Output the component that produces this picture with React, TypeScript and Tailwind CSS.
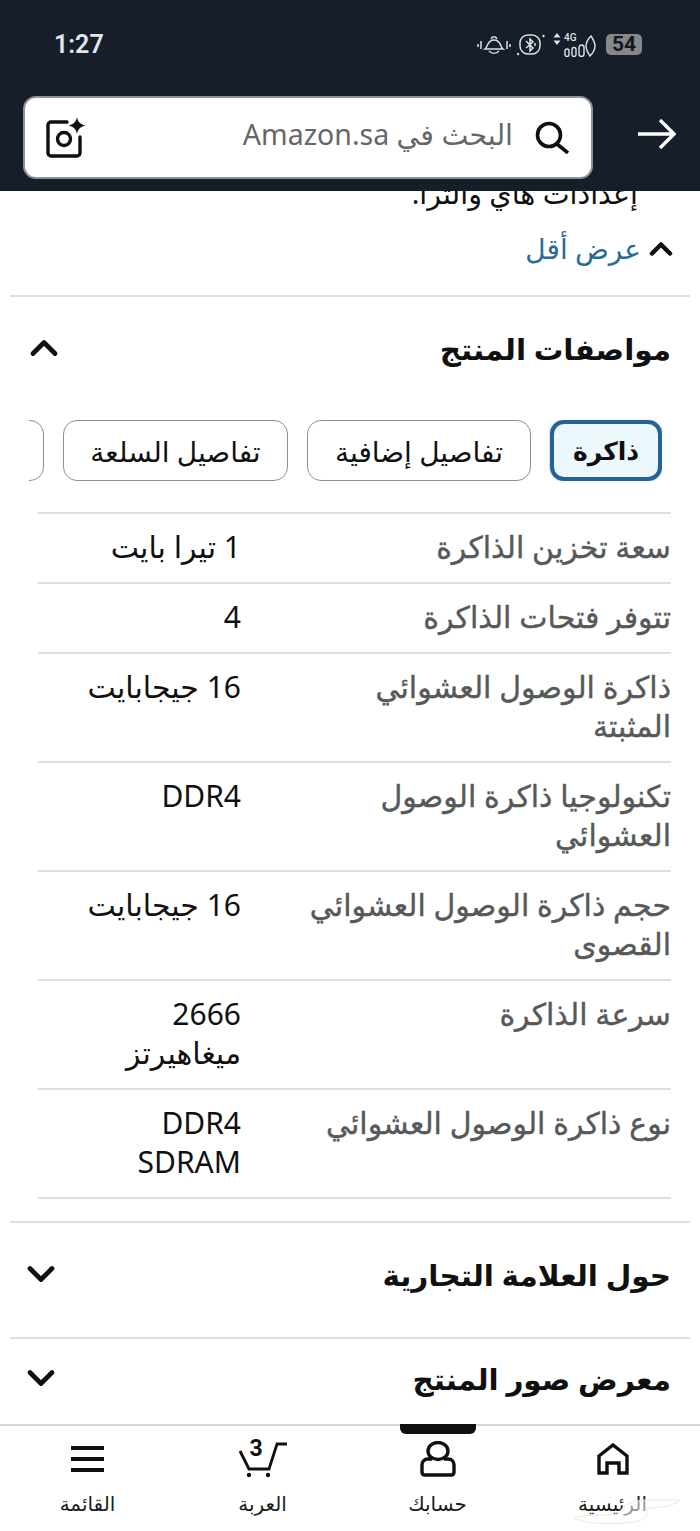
import React from 'react';
import clsx from 'clsx';
import { ChevronUp, ChevronDown } from 'lucide-react';

const specs = [
  { label: 'سعة تخزين الذاكرة', value: '1 تيرا بايت' },
  { label: 'تتوفر فتحات الذاكرة', value: '4' },
  { label: 'ذاكرة الوصول العشوائي المثبتة', value: '16 جيجابايت' },
  { label: 'تكنولوجيا ذاكرة الوصول العشوائي', value: 'DDR4' },
  { label: 'حجم ذاكرة الوصول العشوائي القصوى', value: '16 جيجابايت' },
  { label: 'سرعة الذاكرة', value: '2666 ميغاهيرتز' },
  { label: 'نوع ذاكرة الوصول العشوائي', value: 'DDR4 SDRAM' },
];

function StatusIcons() {
  return (
    <div dir="ltr" className="flex items-center">
      <svg width="34" height="22" viewBox="0 0 34 22" fill="none" stroke="#dfe2e6" strokeWidth="1.5">
        <path d="M1 10v3M4 7v8M30 7v8M33 10v3" />
        <path d="M8 15c3-2 2-9 9-9s6 7 9 9z" />
        <path d="M14 5c1-3 5-3 6 0M12 17c3 3 7 3 10 0" />
      </svg>
      <svg width="28" height="22" viewBox="0 0 28 22" fill="none" stroke="#dfe2e6" strokeWidth="1.5" className="ml-[6px]">
        <rect x="3" y="1" width="20" height="19" rx="8" />
        <path d="M9 7l7 7-3 3V5l3 3-7 6M18 9v3" />
        <circle cx="26.5" cy="2" r="1.2" fill="#dfe2e6" stroke="none" />
        <circle cx="1" cy="20" r="1.2" fill="#dfe2e6" stroke="none" />
      </svg>
      <svg width="8" height="12" viewBox="0 0 8 12" fill="#dfe2e6" className="ml-[8px] -mt-[11px]">
        <path d="M4 0l3.5 4.5h-7zM4 12l3.5-4.5h-7z" />
      </svg>
      <div className="ml-[3px] flex flex-col items-start">
        <span className="text-[10px] font-medium leading-[11px] text-[#dfe2e6] font-['Roboto',sans-serif]">4G</span>
        <svg width="24" height="13" viewBox="0 0 24 13" fill="none" stroke="#dfe2e6" strokeWidth="1.4" className="mt-[1px]">
          <rect x="1" y="5" width="4" height="7.5" rx="2" />
          <rect x="8" y="3.5" width="4" height="9" rx="2" />
          <rect x="15" y="1" width="5" height="11.5" rx="2.5" />
        </svg>
      </div>
      <svg width="11" height="22" viewBox="0 0 11 22" fill="none" stroke="#dfe2e6" strokeWidth="1.4" className="-ml-[3px] mt-[2px]">
        <path d="M6 1C2 5 1 8 1 11s2 7 4 10c3-3 5-6 5-10S8 4 6 1z" />
      </svg>
      <div className="ml-[10px] flex h-[21px] w-[36px] items-center justify-center rounded-[5px] bg-[#85878a] text-[21px] font-bold leading-none text-[#15181d] font-['Roboto',sans-serif]">
        54
      </div>
    </div>
  );
}

function LensIcon() {
  return (
    <svg width="40" height="41" viewBox="0 0 40 41" fill="none" stroke="#0f1111" strokeWidth="3.4">
      <path d="M21 5H5a3 3 0 0 0-3 3v28a3 3 0 0 0 3 3h26a3 3 0 0 0 3-3V20" strokeLinecap="round" />
      <circle cx="18" cy="22" r="6.5" />
      <path d="M31 0c1 5 3 7 8.500 8.500-5.500 1.500-7.500 3.500-8.500 8.500-1-5-3-7-8.500-8.500C28 7 30 5 31 0z" fill="#0f1111" stroke="none" />
    </svg>
  );
}

function SearchIcon() {
  return (
    <svg width="35" height="33" viewBox="0 0 35 33" fill="none" stroke="#0f1111" strokeWidth="3.6">
      <circle cx="14" cy="14" r="11.500" />
      <path d="M22 23l11 9" />
    </svg>
  );
}

function Header() {
  return (
    <header className="h-[191px] shrink-0 bg-[#161e2a]">
      <div dir="ltr" className="flex h-[96px] items-start justify-between pl-[54px] pr-[58px] pt-[29px]">
        <span className="text-[25px] font-semibold leading-[32px] text-[#e3e6ea] font-['Roboto',sans-serif]">1:27</span>
        <div className="pt-[3px]"><StatusIcons /></div>
      </div>
      <div dir="ltr" className="flex items-center pl-[23px]">
        <div className="flex h-[83px] w-[570px] items-center justify-between rounded-[13px] border-2 border-[#8b9299] bg-white px-[21px]">
          <LensIcon />
          <div className="flex items-center gap-[22px]">
            <span dir="rtl" className="mb-[6px] text-[28.5px] leading-none text-[#646868]">البحث في Amazon.sa</span>
            <SearchIcon />
          </div>
        </div>
        <svg width="38" height="30" viewBox="0 0 38 30" fill="none" stroke="#ffffff" strokeWidth="3.4" className="mb-[8px] ml-[45px]">
          <path d="M0 15h36M22 1l14 14-14 14" />
        </svg>
      </div>
    </header>
  );
}

function SectionHead({ title, open, compact }: { title: string; open?: boolean; compact?: boolean }) {
  const Chevron = open ? ChevronUp : ChevronDown;
  return (
    <div
      className={clsx(
        'mx-[10px] flex items-start justify-between border-t-2 border-[#dcdfdf] pr-[19px]',
        open ? 'pl-[12px]' : 'pl-[9px]',
        compact ? 'pt-[19px]' : 'pt-[31px]',
      )}
    >
      <h2 className="text-[29.5px] font-semibold leading-[42px] text-[#0f1111]">{title}</h2>
      <Chevron size={44} strokeWidth={2.6} color="#0f1111" className="-mt-[2px]" />
    </div>
  );
}

function Tabs() {
  return (
    <div className="ml-[29px] mr-[38px] flex gap-[19px] overflow-hidden">
      <button className="h-[61px] w-[112px] shrink-0 rounded-[14px] border-[4px] border-[#256396] bg-[#edf8fd] text-[25px] font-semibold text-[#0f1111] shadow-[0_0_0_1px_#cfe3ee]">ذاكرة</button>
      <button className="h-[61px] w-[224px] shrink-0 rounded-[14px] border border-[#8d9090] text-[28px] text-[#0f1111]">تفاصيل إضافية</button>
      <button className="h-[61px] w-[225px] shrink-0 rounded-[14px] border border-[#8d9090] text-[28px] text-[#0f1111]">تفاصيل السلعة</button>
      <button className="h-[61px] w-[100px] shrink-0 rounded-[14px] border border-[#8d9090]" />
    </div>
  );
}

function SpecTable() {
  return (
    <div className="ml-[38px] mr-[29px] mt-[31px] border-t-2 border-[#dcdfdf]">
      {specs.map((row) => (
        <div key={row.label} className="flex border-b-2 border-[#dcdfdf] pb-[16px] pt-[13px] text-[30px] leading-[39px]">
          <div className="w-[430px] shrink-0 pl-[60px] text-[#565959] [-webkit-text-stroke:0.4px_#565959]">{row.label}</div>
          <div className="flex-1 pl-[21px] text-[#0f1111]">{row.value}</div>
        </div>
      ))}
    </div>
  );
}

function NavItem({ label, children, active }: { label: string; children: React.ReactNode; active?: boolean }) {
  return (
    <div className="relative flex w-[175px] flex-col items-center pt-[10px]">
      {active && <div className="absolute -top-[2px] h-[10px] w-[76px] rounded-b-[6px] bg-[#0f1111]" />}
      <div className="flex h-[46px] items-center justify-center">{children}</div>
      <span className="mt-[9px] text-[20px] leading-[26px] text-[#1a1c1c]">{label}</span>
    </div>
  );
}

function BottomNav() {
  return (
    <nav className="relative flex h-[107px] shrink-0 justify-between border-t-2 border-[#d5d9d9] bg-white">
      <NavItem label="الرئيسية">
        <svg width="32" height="32" viewBox="0 0 32 32" fill="none" stroke="#0f1111" strokeWidth="3.4">
          <path d="M2 30V13L16 2l14 11v17h-8V20H10v10z" />
        </svg>
      </NavItem>
      <NavItem label="حسابك" active>
        <svg width="36" height="36" viewBox="0 0 36 36" fill="none" stroke="#0f1111" strokeWidth="3.4">
          <ellipse cx="18" cy="10" rx="10" ry="8.5" />
          <path d="M12 18H8c-4 0-6 3-6 6v7c0 2 1 3 3 3h26c2 0 3-1 3-3v-7c0-3-2-6-6-6h-4" />
        </svg>
      </NavItem>
      <NavItem label="العربة">
        <div className="relative h-[38px] w-[50px]">
          <svg width="50" height="38" viewBox="0 0 50 38" fill="none" stroke="#0f1111" strokeWidth="2.8" className="absolute inset-0">
            <path d="M2 11l9 18h20l8-25h10" />
            <circle cx="11" cy="35" r="2.2" fill="#0f1111" stroke="none" />
            <circle cx="30" cy="35" r="2.2" fill="#0f1111" stroke="none" />
          </svg>
          <span className="absolute left-[12px] -top-[4px] text-[23px] font-bold leading-[26px] text-[#0f1111] font-['Roboto',sans-serif]">3</span>
        </div>
      </NavItem>
      <NavItem label="القائمة">
        <svg width="33" height="26" viewBox="0 0 33 26" fill="#0f1111">
          <rect y="0" width="33" height="4" />
          <rect y="11" width="33" height="4" />
          <rect y="22" width="33" height="4" />
        </svg>
      </NavItem>
      {/* site watermark in the corner */}
      <svg width="130" height="36" viewBox="0 0 130 36" className="absolute bottom-[3px] right-0" fill="#ffffff" fillOpacity="0.55" stroke="#e8eaea" strokeWidth="1">
        <path d="M4 26c10-4 30-2 44-4 4-8 14-14 30-14h32c-6 6-20 8-34 8 4 6 0 12-12 14-20 3-50 2-60-4z" />
      </svg>
    </nav>
  );
}

export default function App() {
  return (
    <div dir="rtl" className="flex h-[1531px] w-[700px] flex-col overflow-hidden bg-white font-['Noto_Sans','DejaVu_Sans',sans-serif]">
      <Header />
      <main className="min-h-0 flex-1 overflow-hidden">
        <p className="-mt-[17px] mr-[62px] text-[28.5px] leading-[39px] text-[#0f1111]">إعدادات هاي والترا.</p>
        <div className="mr-[28px] mt-[16px] flex items-center gap-[9px]">
          <ChevronUp size={36} strokeWidth={3} color="#0f1111" className="-mx-[7px]" />
          <span className="text-[28px] leading-[39px] text-[#2b6a94]">عرض أقل</span>
        </div>
        <div className="mt-[27px]">
          <SectionHead title="مواصفات المنتج" open />
          <div className="mt-[50px]"><Tabs /></div>
          <SpecTable />
          <div className="mt-[22px]"><SectionHead title="حول العلامة التجارية" /></div>
          <div className="mt-[41px]"><SectionHead title="معرض صور المنتج" compact /></div>
        </div>
      </main>
      <BottomNav />
    </div>
  );
}
